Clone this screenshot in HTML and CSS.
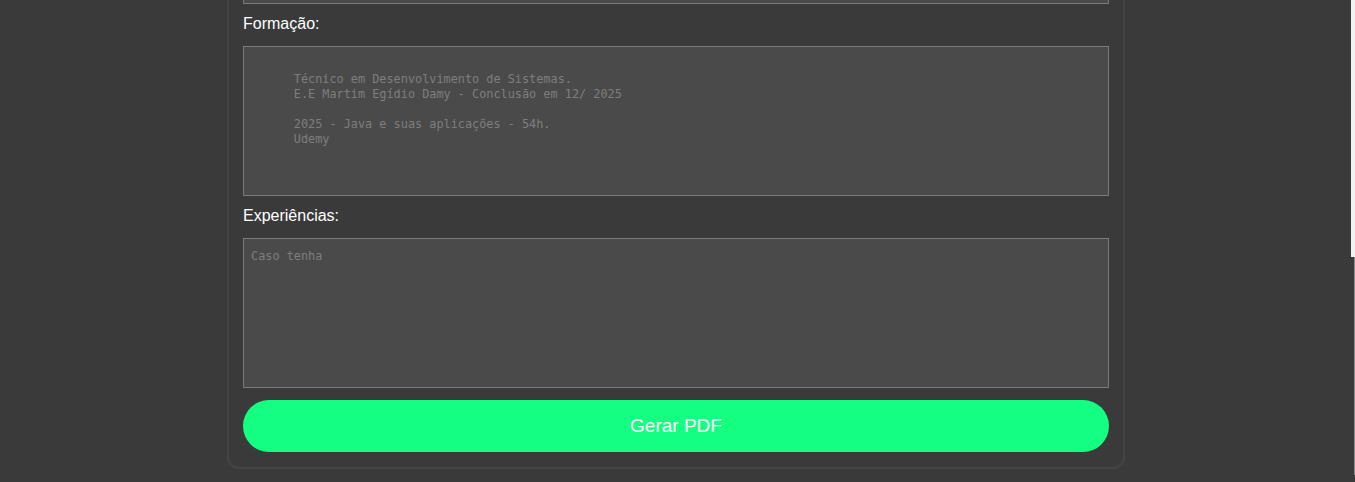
FILE: index.html
```html
<!DOCTYPE html>
<html lang="pt-BR">
<head>
<meta charset="utf-8">
<title>Currículo</title>
<link rel="stylesheet" href="styles.css">
</head>
<body>
<main class="page">
  <form class="card">
    <textarea class="field field-prev" placeholder="Habilidades"></textarea>

    <label class="label" for="formacao">Formação:</label>
    <textarea class="field" id="formacao" placeholder="
      Técnico em Desenvolvimento de Sistemas.
      E.E Martim Egídio Damy - Conclusão em 12/ 2025

      2025 - Java e suas aplicações - 54h.
      Udemy"></textarea>

    <label class="label" for="experiencias">Experiências:</label>
    <textarea class="field" id="experiencias" placeholder="Caso tenha"></textarea>

    <button type="button" class="btn">Gerar PDF</button>
  </form>
</main>
<div class="edge"><div class="edge-top"></div><div class="edge-line"></div></div>
</body>
</html>
```
FILE: styles.css
```css
html, body {
  margin: 0;
  padding: 0;
  background: #3a3a3a;
  overflow: hidden;
}

.page {
  display: flex;
  justify-content: center;
  padding-right: 3px;
}

.card {
  box-sizing: border-box;
  width: 898px;
  margin-top: -148px;
  padding: 0 14px 15px;
  border: 2px solid #444444;
  border-radius: 12px;
  display: flex;
  flex-direction: column;
  font-family: "Liberation Sans", Arial, sans-serif;
}

.label {
  display: block;
  color: #ffffff;
  font-size: 16px;
  line-height: 18px;
  margin: 11px 0 13px;
}

.field {
  box-sizing: border-box;
  display: block;
  width: 100%;
  height: 150px;
  margin: 0;
  padding: 10px 7px 7px;
  background: #4a4a4a;
  border: 1px solid #7a7a7a;
  border-radius: 0;
  resize: none;
  font-family: "DejaVu Sans Mono", "Liberation Mono", monospace;
  font-size: 11.85px;
  line-height: 15px;
  color: #dddddd;
  outline: none;
}

.field::placeholder {
  color: #7e7e7e;
  opacity: 1;
}

.field-prev {
  height: 150px;
}

.btn {
  margin-top: 12px;
  height: 52px;
  border: none;
  border-radius: 26px;
  background: #14ff82;
  color: #ffffff;
  font-family: "Liberation Sans", Arial, sans-serif;
  font-size: 19px;
  cursor: pointer;
}

.edge {
  position: fixed;
  top: 0;
  right: 0;
  width: 4px;
  height: 100%;
  display: flex;
  flex-direction: column;
}

.edge-top {
  height: 257px;
  background: #f2f2f2;
}

.edge-line {
  height: 218px;
  margin-left: 3px;
  width: 1px;
  background: #8a8a8a;
}
```
